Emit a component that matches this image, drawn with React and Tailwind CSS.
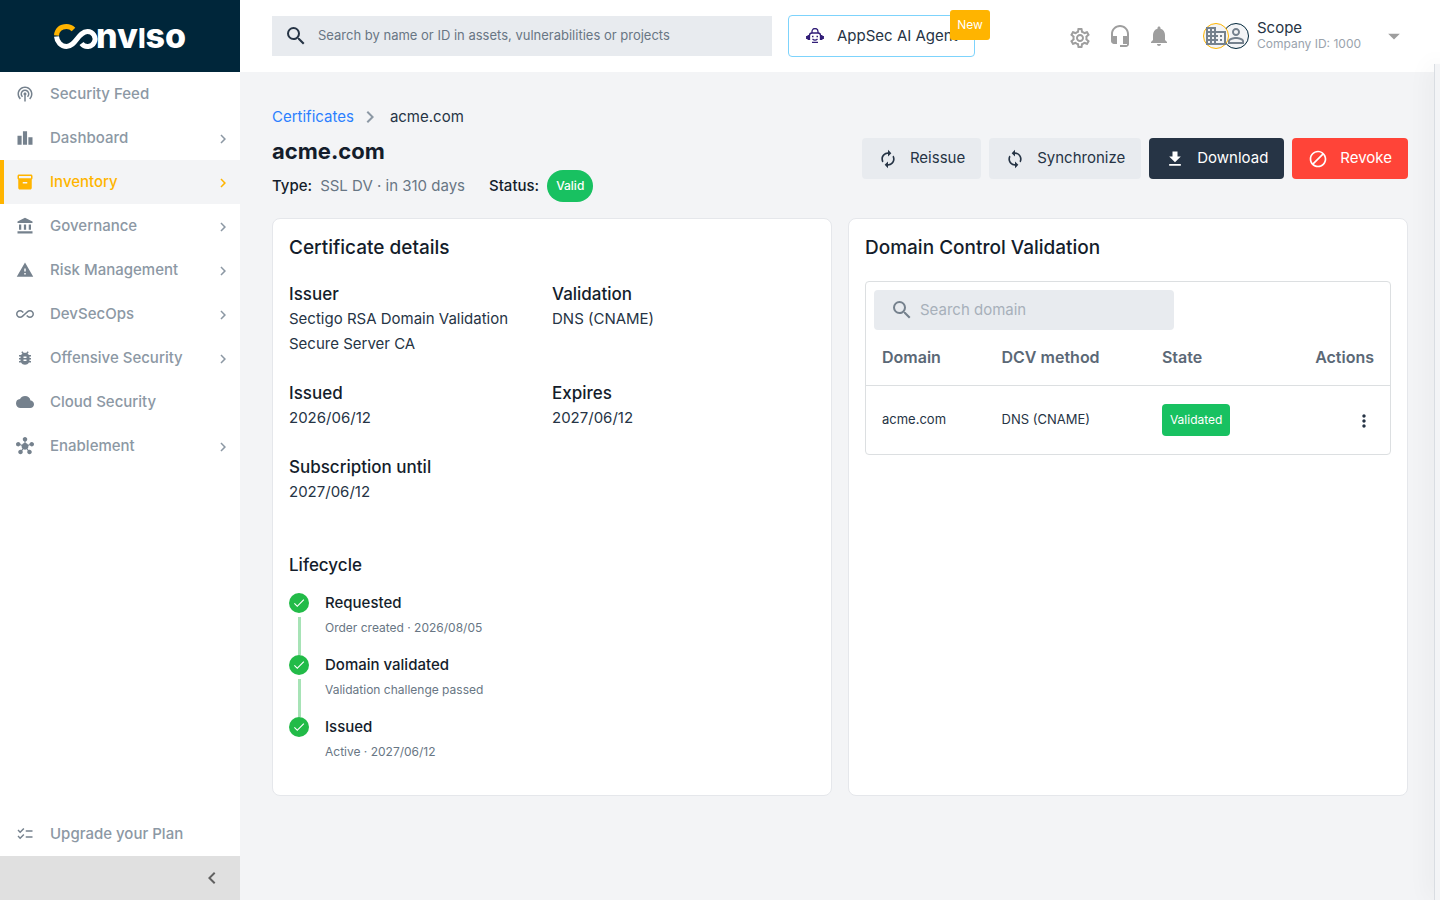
import {
  MdPodcasts, MdLeaderboard, MdInventory2, MdAccountBalance, MdWarning, MdAllInclusive,
  MdBugReport, MdCloud, MdHub, MdChecklist, MdChevronRight, MdChevronLeft, MdSearch,
  MdOutlineSettings, MdDomain, MdPersonOutline, MdArrowDropDown,
  MdAutorenew, MdSync, MdFileDownload, MdDoNotDisturbAlt, MdMoreVert, MdDone,
} from "react-icons/md";
import clsx from "clsx";

const NAV = [
  { label: "Security Feed", icon: MdPodcasts },
  { label: "Dashboard", icon: MdLeaderboard, sub: true },
  { label: "Inventory", icon: MdInventory2, sub: true, active: true },
  { label: "Governance", icon: MdAccountBalance, sub: true },
  { label: "Risk Management", icon: MdWarning, sub: true },
  { label: "DevSecOps", icon: MdAllInclusive, sub: true },
  { label: "Offensive Security", icon: MdBugReport, sub: true },
  { label: "Cloud Security", icon: MdCloud },
  { label: "Enablement", icon: MdHub, sub: true },
];

const STEPS = [
  { title: "Requested", note: "Order created · 2026/08/05" },
  { title: "Domain validated", note: "Validation challenge passed" },
  { title: "Issued", note: "Active · 2027/06/12" },
];

function Logo() {
  return (
    <svg viewBox="0 0 138 60" className="h-[60px] w-[138px]" role="img" aria-label="Conviso">
      <path d="M5.5 30.5C6 36 10 40.5 15.5 40.500C25 40.500 27 25.500 36.500 25.500A7.500 7.500 0 1 1 30.500 37.500" fill="none" stroke="#fff" strokeWidth="5" />
      <path d="M5.500 29.500C6 23.500 10 20.500 15.500 20.500C18.500 20.500 20.500 21.500 22.500 23.500" fill="none" stroke="#ffb400" strokeWidth="5" />
      <text x="45" y="42" fill="#fff" fontFamily="Inter, sans-serif" fontWeight="800" fontSize="34">
        nv<tspan fontSize="27">I</tspan>so
      </text>
    </svg>
  );
}

function RobotIcon() {
  return (
    <svg viewBox="0 0 18 16" className="h-4 w-[18px]" fill="none" stroke="#321e78" strokeWidth="1.3">
      <path d="M6 5V3.5a3 3 0 0 1 6 0V5" />
      <path d="M3.5 12V7.5C3.5 6 4.5 5 6 5h6c1.5 0 2.5 1 2.5 2.5V12" />
      <path d="M.8 8v3M2.3 7v5M17.200 8v3M15.700 7v5" strokeWidth="1.5" />
      <path d="M6 8.500h1.500M10.500 8.500H12M6.500 11c1.500 1.300 3.500 1.300 5 0M6 14.300h6" />
    </svg>
  );
}

function HeadsetIcon() {
  return (
    <svg viewBox="0 0 24 24" className="h-6 w-6" fill="currentColor">
      <path d="M12 1c-4.970 0-9 4.030-9 9v7c0 1.660 1.340 3 3 3h3v-8H5v-2c0-3.870 3.130-7 7-7s7 3.130 7 7v2h-4v8h4v1h-7v2h6c1.660 0 3-1.340 3-3V10c0-4.970-4.030-9-9-9z" />
    </svg>
  );
}

function BellIcon() {
  return (
    <svg viewBox="0 0 24 24" className="h-6 w-6" fill="currentColor">
      <path d="M12 22c1.100 0 2-.9 2-2h-4c0 1.100.89 2 2 2zm6-6v-5c0-3.070-1.640-5.640-4.500-6.320V4c0-.83-.67-1.500-1.500-1.500s-1.500.67-1.500 1.500v.68C7.630 5.360 6 7.920 6 11v5l-2 2v1h16v-1l-2-2z" />
    </svg>
  );
}

function NavItem({ label, icon: Icon, sub, active }) {
  return (
    <a
      href="#"
      aria-current={active ? "page" : undefined}
      className={clsx(
        "flex h-11 items-center border-l-4 pr-2 pl-3 text-[15px] font-medium",
        active ? "border-[#ffb400] bg-[#f3f4f6] text-[#ffb400]" : "border-transparent text-[#8c98a4]"
      )}
    >
      <Icon className={clsx("h-[18px] w-[18px]", !active && "text-[#75818d]")} />
      <span className="ml-4 flex-1">{label}</span>
      {sub && <MdChevronRight className="mt-0.5 h-[18px] w-[18px]" />}
    </a>
  );
}

function Sidebar() {
  return (
    <aside className="flex w-60 shrink-0 flex-col bg-white">
      <div className="flex h-[72px] items-center justify-center bg-[#00263a]">
        <Logo />
      </div>
      <nav className="flex flex-1 flex-col">
        {NAV.map((item) => (
          <NavItem key={item.label} {...item} />
        ))}
        <div className="mt-auto">
          <NavItem label="Upgrade your Plan" icon={MdChecklist} />
        </div>
      </nav>
      <button type="button" aria-label="Collapse menu" className="flex h-11 items-center justify-end bg-[#e0e0e0] pr-4 text-[#616161]">
        <MdChevronLeft className="h-6 w-6" />
      </button>
    </aside>
  );
}

function Header() {
  return (
    <header className="flex h-[72px] items-center bg-white px-8">
      <label className="flex h-10 w-[500px] items-center bg-[#e8ebef] pl-3">
        <MdSearch className="h-6 w-6 text-[#263445]" />
        <input
          type="text"
          aria-label="Global search"
          placeholder="Search by name or ID in assets, vulnerabilities or projects"
          className="ml-[10px] flex-1 bg-transparent text-[13px] text-[#263445] outline-none placeholder:text-[#687684]"
        />
      </label>
      <div className="relative ml-4">
        <button type="button" className="flex h-[42px] w-[187px] items-center overflow-hidden rounded border border-[#7dd3fc] pl-[17px] text-[15px] whitespace-nowrap text-[#263445]">
          <RobotIcon />
          <span className="ml-[13px]">AppSec AI Agent</span>
        </button>
        <span className="absolute -top-[5px] -right-[15px] flex h-[30px] w-10 items-center justify-center rounded-[3px] bg-[#ffb400] text-[12px] text-white">
          New
        </span>
      </div>
      <div className="ml-auto flex items-center text-[#9e9e9e]">
        <button type="button" aria-label="Settings" className="pt-1"><MdOutlineSettings className="h-6 w-6" /></button>
        <button type="button" aria-label="Support" className="ml-4"><HeadsetIcon /></button>
        <button type="button" aria-label="Notifications" className="ml-[15px]"><BellIcon /></button>
      </div>
      <button type="button" className="ml-8 flex items-center text-left">
        <span className="z-10 flex h-[26px] w-[26px] items-center justify-center rounded-full border border-[#ffb400] bg-[#f3f4f6] text-[#75818d]">
          <MdDomain className="h-6 w-6 shrink-0" />
        </span>
        <span className="-ml-[6px] flex h-[26px] w-[26px] items-center justify-center rounded-full border border-[#00263a] bg-[#f3f4f6] text-[#75818d]">
          <MdPersonOutline className="h-6 w-6 shrink-0" />
        </span>
        <span className="ml-2 block w-[123px]">
          <span className="block text-[15px] leading-4 text-[#263445]">Scope</span>
          <span className="block text-[12px] leading-4 text-[#9aa3ad]">Company ID: 1000</span>
        </span>
        <MdArrowDropDown className="h-7 w-7 text-[#9e9e9e]" />
      </button>
    </header>
  );
}

function ActionButton({ icon: Icon, label, className }) {
  return (
    <button type="button" className={clsx("flex h-[41px] items-center rounded px-4 text-[15px]", className)}>
      <Icon className="h-5 w-5" />
      <span className="ml-3">{label}</span>
    </button>
  );
}

function Field({ label, children }) {
  return (
    <div>
      <dt className="text-[17px] leading-6 font-medium text-[#141d2b]">{label}</dt>
      <dd className="text-[15px] leading-[25px] text-[#263445]">{children}</dd>
    </div>
  );
}

function CertificateCard() {
  return (
    <section className="rounded-lg border border-[#e5e7eb] bg-white px-4 pt-[17px] pb-[34px]">
      <h2 className="text-[19px] leading-6 font-medium text-[#141d2b]">Certificate details</h2>
      <dl className="mt-[22px] grid grid-cols-2 gap-y-[25px]">
        <Field label="Issuer">
          Sectigo RSA Domain Validation
          <br />
          Secure Server CA
        </Field>
        <Field label="Validation">DNS (CNAME)</Field>
        <Field label="Issued">2026/06/12</Field>
        <Field label="Expires">2027/06/12</Field>
        <Field label="Subscription until">2027/06/12</Field>
      </dl>
      <h3 className="mt-[49px] text-[17px] leading-6 font-medium text-[#141d2b]">Lifecycle</h3>
      <ol className="mt-4">
        {STEPS.map((step, i) => (
          <li key={step.title} className={clsx("flex", i < STEPS.length - 1 && "h-[62px]")}>
            <span className="flex w-5 flex-col items-center">
              <span className="flex h-5 w-5 items-center justify-center rounded-full bg-[#22bb48] text-white">
                <MdDone className="h-[14px] w-[14px]" />
              </span>
              {i < STEPS.length - 1 && <span className="mt-1 w-[3px] flex-1 bg-[#a7e3b6]" />}
            </span>
            <span className="ml-4">
              <span className="block text-[15px] leading-5 font-medium text-[#141d2b]">{step.title}</span>
              <span className="mt-1.5 block text-[12px] leading-[18px] text-[#687684]">{step.note}</span>
            </span>
          </li>
        ))}
      </ol>
    </section>
  );
}

function DomainCard() {
  return (
    <section className="rounded-lg border border-[#e5e7eb] bg-white px-4 pt-[17px] pb-4">
      <h2 className="text-[19px] leading-6 font-medium text-[#141d2b]">Domain Control Validation</h2>
      <div className="mt-[21px] rounded border border-[#dcdfe1]">
        <label className="mt-2 ml-2 flex h-10 w-[300px] items-center rounded bg-[#e8ebef] pl-4">
          <MdSearch className="h-6 w-6 text-[#75818d]" />
          <input
            type="text"
            aria-label="Search domain"
            placeholder="Search domain"
            className="ml-1.5 w-56 bg-transparent text-[15px] text-[#263445] outline-none placeholder:text-[#a7b0ba]"
          />
        </label>
        <table className="w-full text-left text-[#263445]">
          <thead>
            <tr className="h-[55px] border-b border-[#dcdfe1] text-[16px] text-[#5b6876]">
              <th className="w-[23%] pl-4 font-semibold">Domain</th>
              <th className="w-[31%] pl-[15px] font-semibold">DCV method</th>
              <th className="pl-[13px] font-semibold">State</th>
              <th className="pr-4 text-right font-semibold">Actions</th>
            </tr>
          </thead>
          <tbody>
            <tr className="h-[69px] text-[13px]">
              <td className="pl-4">acme.com</td>
              <td className="pl-[15px]">DNS (CNAME)</td>
              <td className="pl-[13px]">
                <span className="inline-flex h-8 items-center rounded bg-[#18c161] px-2 text-[12px] text-white">Validated</span>
              </td>
              <td className="pr-4">
                <button type="button" aria-label="Row actions" className="ml-auto block pt-0.5">
                  <MdMoreVert className="h-5 w-5" />
                </button>
              </td>
            </tr>
          </tbody>
        </table>
      </div>
    </section>
  );
}

export default function App() {
  return (
    <div className="flex min-h-screen overflow-hidden bg-[#f3f4f6] font-['Inter',sans-serif]">
      <Sidebar />
      <div className="min-w-0 flex-1">
        <Header />
        <main className="px-8 pt-[33px] pb-8">
          <nav aria-label="Breadcrumb" className="flex h-6 items-center text-[15px] text-[#263445]">
            <a href="#" className="text-[#2b7fff]">Certificates</a>
            <MdChevronRight className="mx-1 h-6 w-6 text-[#8c98a4]" />
            <span className="ml-1">acme.com</span>
          </nav>
          <div className="mt-1.5 flex items-start justify-between">
            <div>
              <h1 className="text-[22px] leading-8 font-bold text-[#141d2b]">acme.com</h1>
              <div className="mt-[3px] flex items-center text-[15px]">
                <span className="font-medium text-[#141d2b]">Type:</span>
                <span className="ml-2 text-[#687684]">SSL DV · in 310 days</span>
                <span className="ml-6 font-medium text-[#141d2b]">Status:</span>
                <span className="ml-2 flex h-8 items-center rounded-full bg-[#18c161] px-[9px] text-[12px] font-medium text-white">Valid</span>
              </div>
            </div>
            <div className="mt-[3px] flex gap-2">
              <ActionButton icon={MdAutorenew} label="Reissue" className="bg-[#e8ebef] text-[#263445]" />
              <ActionButton icon={MdSync} label="Synchronize" className="bg-[#e8ebef] text-[#263445]" />
              <ActionButton icon={MdFileDownload} label="Download" className="bg-[#263445] text-white" />
              <ActionButton icon={MdDoNotDisturbAlt} label="Revoke" className="bg-[#ff4438] text-white" />
            </div>
          </div>
          <div className="mt-4 grid grid-cols-2 gap-4">
            <CertificateCard />
            <DomainCard />
          </div>
        </main>
      </div>
      {/* edge of the closed side drawer */}
      <div className="fixed top-16 right-0 bottom-0 w-1.5 border-l border-[#d9dde2] bg-[#f3f4f6] shadow-[0_0_24px_rgba(0,0,0,0.12)]" />
    </div>
  );
}
